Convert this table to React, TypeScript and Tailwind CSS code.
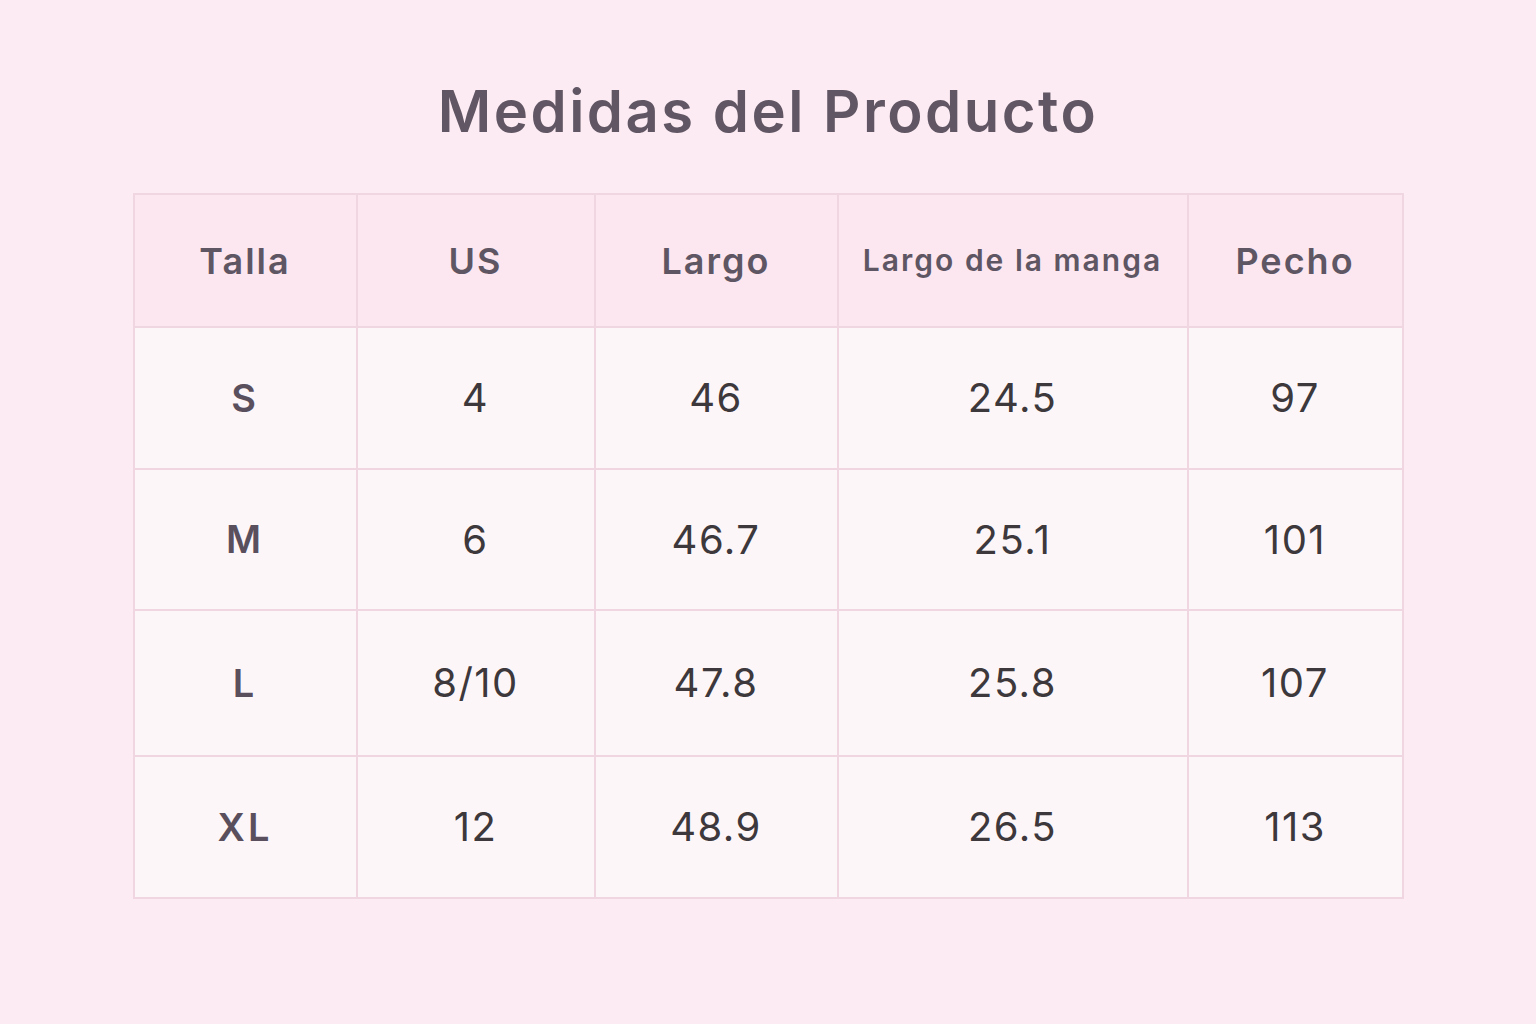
import React from 'react';

const headers = ['Talla', 'US', 'Largo', 'Largo de la manga', 'Pecho'];

const rows = [
    { size: 'S', us: '4', largo: '46', manga: '24.5', pecho: '97', h: 'h-[142px]' },
    { size: 'M', us: '6', largo: '46.7', manga: '25.1', pecho: '101', h: 'h-[141px]' },
    { size: 'L', us: '8/10', largo: '47.8', manga: '25.8', pecho: '107', h: 'h-[146px]' },
    { size: 'XL', us: '12', largo: '48.9', manga: '26.5', pecho: '113', h: 'h-[142px]' },
];

const colWidths = ['w-[223px]', 'w-[238px]', 'w-[243px]', 'w-[350px]', 'w-[215px]'];

export default function App() {
    return (
        <div className="min-h-screen w-full bg-[#fdebf3] flex flex-col items-center font-['Inter',sans-serif]">
            <h1 className="mt-[76px] text-[58px] leading-[70px] font-semibold text-[#615764] tracking-[2.5px]">
                Medidas del Producto
            </h1>

            <table className="mt-[47px] border-collapse border-2 border-[#f0d6e1] table-fixed">
                <thead>
                    <tr className="h-[133px] bg-[#fce7f0]">
                        {headers.map((h, i) => (
                            <th
                                key={h}
                                className={`${colWidths[i]} border-2 border-[#f0d6e1] font-semibold text-[#5f5664] ${i === 3 ? 'text-[30px] tracking-[2px]' : 'text-[36px] tracking-[2px]'}`}
                            >
                                {h}
                            </th>
                        ))}
                    </tr>
                </thead>
                <tbody>
                    {rows.map((r) => (
                        <tr key={r.size} className={`${r.h} bg-[#fdf6f9]`}>
                            <td className="border-2 border-[#f0d6e1] text-center text-[38px] tracking-[3px] font-semibold text-[#5a505d]">{r.size}</td>
                            <td className="border-2 border-[#f0d6e1] text-center text-[40px] tracking-[1.5px] text-[#3d383b]">{r.us}</td>
                            <td className="border-2 border-[#f0d6e1] text-center text-[40px] tracking-[1.5px] text-[#3d383b]">{r.largo}</td>
                            <td className="border-2 border-[#f0d6e1] text-center text-[40px] tracking-[1.5px] text-[#3d383b]">{r.manga}</td>
                            <td className="border-2 border-[#f0d6e1] text-center text-[40px] tracking-[1.5px] text-[#3d383b]">{r.pecho}</td>
                        </tr>
                    ))}
                </tbody>
            </table>
        </div>
    );
}
